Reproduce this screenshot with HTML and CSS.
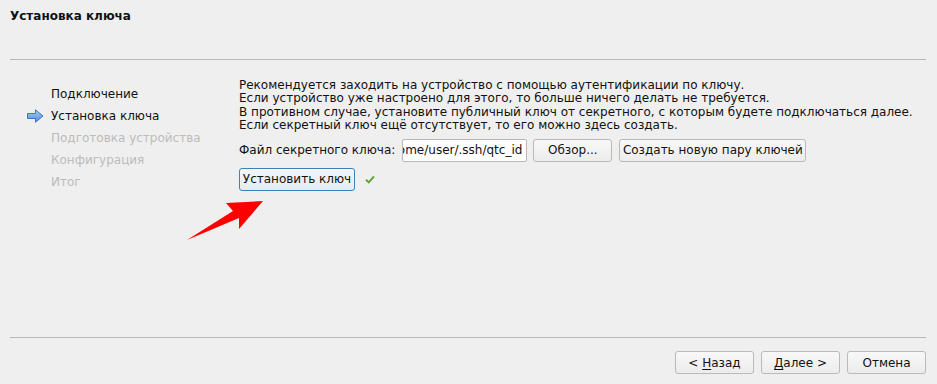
FILE: index.html
```html
<!DOCTYPE html>
<html lang="ru">
<head>
<meta charset="utf-8">
<title>Установка ключа</title>
<link rel="stylesheet" href="styles.css">
</head>
<body>
<div class="wizard">
  <div class="title">Установка ключа</div>
  <div class="sep"></div>
  <div class="main">
    <ul class="nav">
      <li class="step done"><span class="slot"></span>Подключение</li>
      <li class="step current"><span class="slot"><svg width="17" height="14" viewBox="0 0 17 14"><defs><linearGradient id="ag" x1="0" y1="0" x2="0" y2="1"><stop offset="0" stop-color="#a9cdf4"/><stop offset="1" stop-color="#4f8fdc"/></linearGradient></defs><path d="M0.5 4.5 H8.5 V0.8 L16 7 L8.5 13.2 V9.5 H0.5 Z" fill="url(#ag)" stroke="#3d74c2" stroke-width="1" stroke-linejoin="round"/></svg></span>Установка ключа</li>
      <li class="step todo"><span class="slot"></span>Подготовка устройства</li>
      <li class="step todo"><span class="slot"></span>Конфигурация</li>
      <li class="step todo"><span class="slot"></span>Итог</li>
    </ul>
    <div class="content">
      <p class="info">Рекомендуется заходить на устройство с помощью аутентификации по ключу.<br>Если устройство уже настроено для этого, то больше ничего делать не требуется.<br>В противном случае, установите публичный ключ от секретного, с которым будете подключаться далее.<br>Если секретный ключ ещё отсутствует, то его можно здесь создать.</p>
      <div class="row">
        <span class="label">Файл секретного ключа:</span>
        <div class="field"><span>/home/user/.ssh/qtc_id</span></div>
        <button class="btn browse">Обзор...</button>
        <button class="btn create">Создать новую пару ключей</button>
      </div>
      <div class="row install">
        <button class="btn focus">Установить ключ</button>
        <svg class="check" width="10" height="9" viewBox="0 0 10 9"><path d="M1 4.8 L3.8 7.4 L9 1.4" fill="none" stroke="#5fa536" stroke-width="2"/></svg>
      </div>
    </div>
  </div>
  <div class="sep"></div>
  <div class="footer">
    <button class="btn nav-btn"><span>&lt; <u>Н</u>азад</span></button>
    <button class="btn nav-btn"><span><u>Д</u>алее &gt;</span></button>
    <button class="btn nav-btn">Отмена</button>
  </div>
</div>
<svg class="annot" width="937" height="384" viewBox="0 0 937 384"><polygon points="187,240 233,211 226,203 263,201 239,229 239,218" fill="#ff0000"/></svg>
</body>
</html>
```
FILE: styles.css
```css
html, body {
  margin: 0;
  padding: 0;
  background: #efefef;
}
body {
  font-family: "DejaVu Sans", sans-serif;
  font-size: 12px;
  color: #1a1a1a;
  width: 937px;
  height: 384px;
  overflow: hidden;
  position: relative;
}
.wizard {
  height: 384px;
  display: flex;
  flex-direction: column;
  padding: 0 11px 0 10px;
  box-sizing: border-box;
}
.title {
  font-weight: bold;
  line-height: 14px;
  padding-top: 9px;
  height: 50px;
  color: #111;
}
.sep {
  height: 0;
  border-top: 1px solid #b9b9b9;
}
.main {
  flex: 1;
  display: flex;
}
.nav {
  list-style: none;
  margin: 0;
  padding: 23px 0 0 0;
  width: 229px;
  flex: none;
}
.step {
  height: 22px;
  line-height: 22px;
  display: flex;
  align-items: center;
  white-space: nowrap;
}
.slot {
  width: 17px;
  margin-left: 17px;
  margin-right: 7px;
  height: 14px;
  display: flex;
  align-items: center;
}
.done, .current { color: #111; }
.todo { color: #bcbcbc; }
.content {
  padding-top: 19px;
}
.info {
  margin: 0;
  line-height: 13.4px;
  white-space: nowrap;
  color: #111;
}
.row {
  display: flex;
  align-items: center;
  margin-top: 6px;
}
.label {
  margin-right: 7px;
  color: #111;
}
.field {
  width: 125px;
  height: 23px;
  box-sizing: border-box;
  background: #fff;
  border: 1px solid #b8b8b8;
  border-radius: 2px;
  display: flex;
  justify-content: flex-end;
  align-items: center;
  overflow: hidden;
  padding-right: 4px;
  white-space: nowrap;
  color: #111;
  margin-right: 6px;
}
.btn {
  font-family: "DejaVu Sans", sans-serif;
  font-size: 12px;
  color: #111;
  height: 23px;
  box-sizing: border-box;
  border: 1px solid #bababa;
  border-radius: 3px;
  background: linear-gradient(#f8f8f8, #ececec);
  padding: 0 2px;
  margin: 0;
  white-space: nowrap;
}
.browse {
  width: 79px;
  margin-right: 7px;
}
.create {
  width: 187px;
}
.install {
  margin-top: 6px;
}
.focus {
  width: 116px;
  border-color: #3f80b6;
  background: linear-gradient(#f3f6f9, #e5ebf0);
}
.check {
  margin-left: 10px;
}
.footer {
  height: 46px;
  display: flex;
  justify-content: flex-end;
  align-items: flex-start;
  padding-top: 13px;
  box-sizing: border-box;
  gap: 7px;
}
.nav-btn {
  width: 79px;
}
.nav-btn u {
  text-decoration-thickness: 1px;
  text-underline-offset: 2px;
}
.annot {
  position: absolute;
  left: 0;
  top: 0;
  pointer-events: none;
}
```
